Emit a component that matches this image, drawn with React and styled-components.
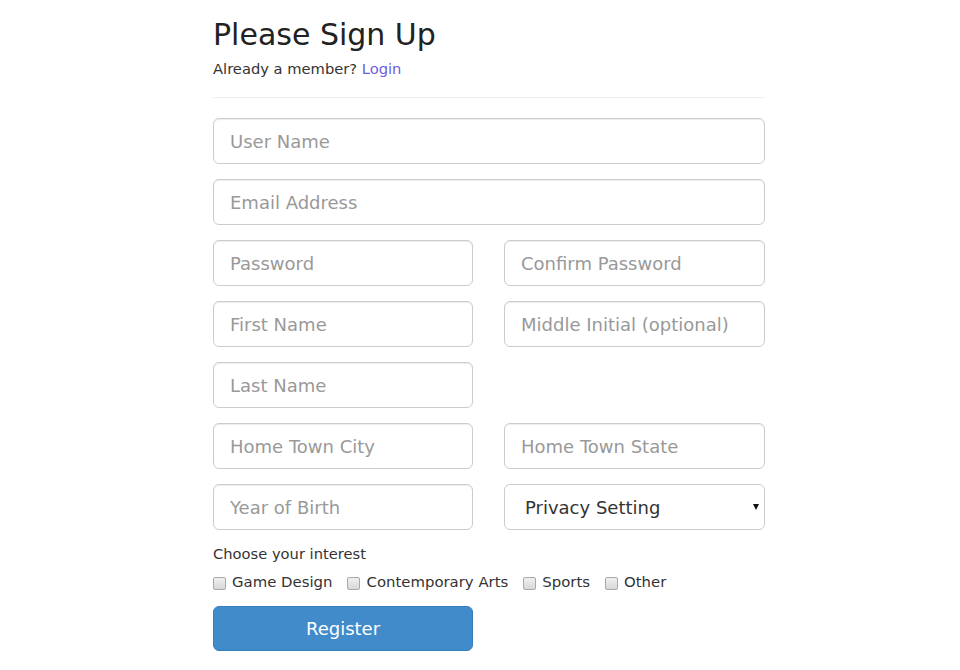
import React from "react";
import styled, { createGlobalStyle } from "styled-components";

const GlobalStyle = createGlobalStyle`
  body {
    margin: 0;
    background: #fff;
    font-family: "DejaVu Sans", Verdana, sans-serif;
    color: #333;
  }
  * { box-sizing: border-box; }
`;

const Page = styled.div`
  padding: 18px 0 0 213px;
`;

const Form = styled.form`
  width: 552px;
`;

const Title = styled.h1`
  margin: 0;
  font-size: 30px;
  line-height: 33px;
  font-weight: normal;
  color: #222;
`;

const Lead = styled.p`
  margin: 7px 0 0;
  font-size: 14.7px;
  line-height: 21px;
  color: #333;

  a {
    color: #6b60dd;
    text-decoration: none;
  }
`;

const Divider = styled.hr`
  margin: 18px 0 20px;
  border: 0;
  border-top: 1px solid #eee;
`;

const Row = styled.div`
  display: grid;
  grid-template-columns: ${(p) => (p.$split ? "260px 261px" : "1fr")};
  column-gap: 31px;
  margin-bottom: ${(p) => (p.$last ? "0" : "15px")};
`;

const Field = styled.input`
  width: 100%;
  height: 46px;
  padding: 10px 16px;
  font-family: inherit;
  font-size: 18px;
  color: #555;
  background: #fff;
  border: 1px solid #ccc;
  border-radius: 6px;
  box-shadow: inset 0 1px 1px rgba(0, 0, 0, 0.075);
  outline: none;

  &::placeholder {
    color: #999;
  }
`;

const SelectWrap = styled.div`
  position: relative;

  &::after {
    content: "";
    position: absolute;
    right: 6px;
    top: 20px;
    border-left: 3.5px solid transparent;
    border-right: 3.5px solid transparent;
    border-top: 6px solid #111;
    pointer-events: none;
  }
`;

const Select = styled.select`
  width: 100%;
  height: 46px;
  padding: 10px 20px;
  font-family: inherit;
  font-size: 18px;
  color: #333;
  background: #fff;
  border: 1px solid #ccc;
  border-radius: 6px;
  appearance: none;
  outline: none;
`;

const Caption = styled.div`
  margin-top: 13px;
  font-size: 14.7px;
  line-height: 21px;
  color: #333;
`;

const Checks = styled.div`
  display: flex;
  gap: 15px;
  margin-top: 8px;
  font-size: 14.9px;
  line-height: 21px;
`;

const CheckLabel = styled.label`
  display: flex;
  align-items: center;
  gap: 6px;
  color: #333;
`;

const Box = styled.input.attrs({ type: "checkbox" })`
  appearance: none;
  width: 13px;
  height: 13px;
  margin: 1px 0 0;
  border: 1px solid #a9a9a9;
  border-radius: 2px;
  background: linear-gradient(#f0f0f0, #d8d8d8);
`;

const Submit = styled.button`
  display: block;
  width: 260px;
  height: 45px;
  margin-top: 13px;
  font-family: inherit;
  font-size: 18px;
  color: #fff;
  background: #428bca;
  border: 1px solid #357ebd;
  border-radius: 6px;
`;

const interests = ["Game Design", "Contemporary Arts", "Sports", "Other"];

export default function App() {
  return (
    <Page>
      <GlobalStyle />
      <Form onSubmit={(e) => e.preventDefault()}>
        <Title>Please Sign Up</Title>
        <Lead>
          Already a member? <a href="#">Login</a>
        </Lead>
        <Divider />

        <Row>
          <Field placeholder="User Name" />
        </Row>
        <Row>
          <Field placeholder="Email Address" />
        </Row>
        <Row $split>
          <Field type="password" placeholder="Password" />
          <Field type="password" placeholder="Confirm Password" />
        </Row>
        <Row $split>
          <Field placeholder="First Name" />
          <Field placeholder="Middle Initial (optional)" />
        </Row>
        <Row $split>
          <Field placeholder="Last Name" />
        </Row>
        <Row $split>
          <Field placeholder="Home Town City" />
          <Field placeholder="Home Town State" />
        </Row>
        <Row $split $last>
          <Field placeholder="Year of Birth" />
          <SelectWrap>
            <Select defaultValue="">
              <option value="">Privacy Setting</option>
              <option value="public">Public</option>
              <option value="private">Private</option>
            </Select>
          </SelectWrap>
        </Row>

        <Caption>Choose your interest</Caption>
        <Checks>
          {interests.map((name) => (
            <CheckLabel key={name}>
              <Box />
              {name}
            </CheckLabel>
          ))}
        </Checks>

        <Submit type="submit">Register</Submit>
      </Form>
    </Page>
  );
}
